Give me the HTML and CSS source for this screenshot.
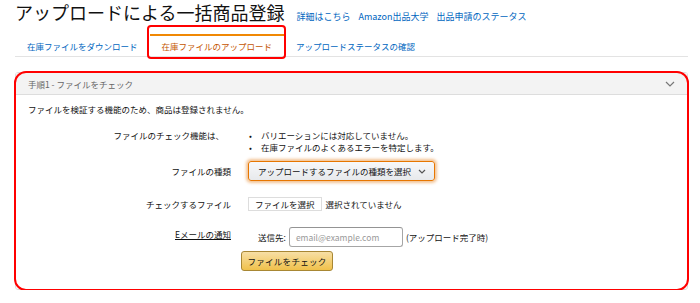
FILE: index.html
```html
<!DOCTYPE html>
<html lang="ja">

<head>
  <meta charset="UTF-8">
  <title>アップロードによる一括商品登録</title>
  <link rel="stylesheet" href="styles.css">
</head>

<body>
  <div class="page-head">
    <h1>アップロードによる一括商品登録</h1>
    <a href="#">詳細はこちら</a>
    <a href="#">Amazon出品大学</a>
    <a href="#">出品申請のステータス</a>
  </div>

  <div class="tabs">
    <a class="tab" href="#">在庫ファイルをダウンロード</a>
    <a class="tab active" href="#">在庫ファイルのアップロード</a>
    <a class="tab" href="#">アップロードステータスの確認</a>
  </div>

  <div class="panel">
    <div class="panel-head">
      <span>手順1 - ファイルをチェック</span>
      <svg class="chevron" width="10" height="6" viewBox="0 0 10 6">
        <path d="M1 1l4 4 4-4" fill="none" stroke="#777" stroke-width="1.2"/>
      </svg>
    </div>
    <div class="panel-body">
      <p class="intro">ファイルを検証する機能のため、商品は登録されません。</p>

      <div class="row row-notes">
        <div class="label">ファイルのチェック機能は、</div>
        <ul class="notes">
          <li>バリエーションには対応していません。</li>
          <li>在庫ファイルのよくあるエラーを特定します。</li>
        </ul>
      </div>

      <div class="row row-type">
        <div class="label">ファイルの種類</div>
        <div class="select">
          アップロードするファイルの種類を選択
          <svg width="8" height="5" viewBox="0 0 8 5"><path d="M1 1l3 3 3-3" fill="none" stroke="#555" stroke-width="1.2"/></svg>
        </div>
      </div>

      <div class="row row-file">
        <div class="label">チェックするファイル</div>
        <div class="file">
          <span class="file-btn">ファイルを選択</span>
          <span>選択されていません</span>
        </div>
      </div>

      <div class="row row-email">
        <div class="label"><a class="plain-link" href="#">Eメールの通知</a></div>
        <div>
          <div class="email">
            <span>送信先:</span>
            <span class="input">email@example.com</span>
            <span>(アップロード完了時)</span>
          </div>
          <button class="check-btn">ファイルをチェック</button>
        </div>
      </div>
    </div>
  </div>
</body>

</html>
```

FILE: styles.css
```css
body {
  margin: 0;
  padding: 0 12px 0 15px;
  font-family: "Noto Sans CJK JP", sans-serif;
  font-size: 8.5px;
  color: #111;
  background: #fff;
}

a {
  color: #0066c0;
  text-decoration: none;
}

.page-head {
  display: flex;
  align-items: baseline;
  gap: 8px;
}

.page-head h1 {
  margin: 0 4px 0 0;
  font-size: 18px;
  font-weight: normal;
  line-height: 24px;
}

.page-head a {
  font-size: 9px;
}

.tabs {
  display: flex;
  margin-top: 10px;
  border-bottom: 1px solid #e3e3e3;
}

.tab {
  position: relative;
  padding: 4px 12px;
  line-height: 12px;
  border-top: 2px solid transparent;
}

.tab.active {
  color: #c45500;
  border-top-color: #f08804;
}

/* красная рамка-выделение */
.tab.active::after {
  content: "";
  position: absolute;
  top: -11px;
  left: -3px;
  right: -2px;
  bottom: -3px;
  border: 2px solid #f00;
  border-radius: 4px;
}

.panel {
  position: relative;
  margin-top: 15px;
  border: 1px solid #ddd;
  border-radius: 3px;
}

.panel::after {
  content: "";
  position: absolute;
  inset: -2px;
  border: 2px solid #f00;
  border-radius: 12px;
}

.panel-head {
  display: flex;
  justify-content: space-between;
  align-items: center;
  height: 21px;
  padding: 0 12px;
  background: #f3f3f3;
  border-bottom: 1px solid #ddd;
  color: #666;
}

.panel-body {
  padding: 8px 12px 18px;
  line-height: 12px;
}

.intro {
  margin: 0;
}

.row {
  display: grid;
  grid-template-columns: 203px 1fr;
  column-gap: 17px;
  align-items: center;
}

.label {
  text-align: right;
}

.row-notes {
  margin-top: 14px;
  align-items: start;
}

.row-notes .label {
  margin-right: 7px;
}

.notes {
  margin: 0 0 0 1px;
  padding: 0;
  list-style: none;
}

.notes li::before {
  content: "•";
  display: inline-block;
  width: 12px;
}

.row-type {
  margin-top: 8px;
}

.select {
  display: flex;
  align-items: center;
  gap: 7px;
  width: max-content;
  height: 18px;
  padding: 0 8px 0 9px;
  border: 1px solid #e77600;
  border-radius: 3px;
  background: linear-gradient(#f7f8fa, #e7e9ec);
  box-shadow: 0 0 3px 2px rgba(228, 121, 17, 0.45);
}

.row-file {
  margin-top: 16px;
}

.file {
  display: flex;
  align-items: center;
  gap: 4px;
}

.file-btn {
  padding: 0 6px;
  border: 1px solid #ddd;
  background: #fff;
}

.row-email {
  margin-top: 16px;
  align-items: start;
}

.row-email .label {
  margin-top: 1px;
}

.plain-link {
  color: #111;
  text-decoration: underline;
}

.email {
  display: flex;
  align-items: center;
  gap: 3px;
  padding-left: 10px;
}

.input {
  width: 100px;
  height: 18px;
  line-height: 18px;
  padding: 0 6px;
  border: 1px solid #a6a6a6;
  border-top-color: #949494;
  border-radius: 3px;
  color: #999;
}

.check-btn {
  display: block;
  width: 92px;
  height: 20px;
  margin: 4px 0 0 -7px;
  padding: 0;
  white-space: nowrap;
  font-family: inherit;
  font-size: 8.5px;
  letter-spacing: 0.3px;
  color: #111;
  border: 1px solid #a88734;
  border-radius: 3px;
  background: linear-gradient(#f7dfa5, #f0c14b);
}
```
